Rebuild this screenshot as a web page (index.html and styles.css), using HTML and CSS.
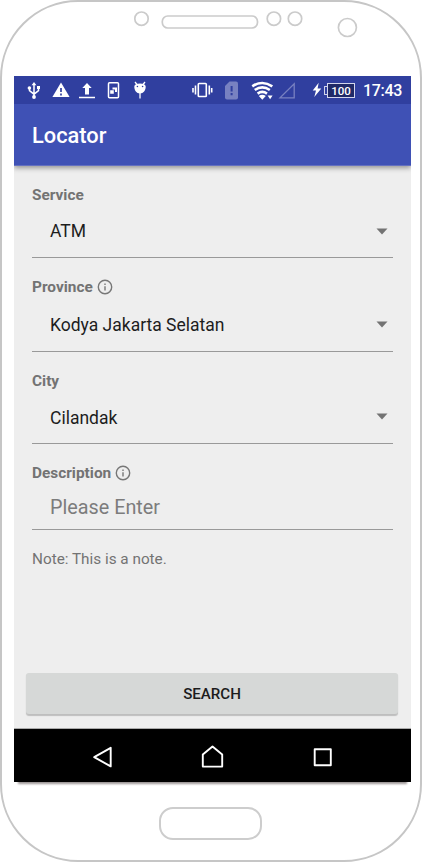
FILE: index.html
```html
<!DOCTYPE html>
<html lang="en">
<head>
<meta charset="utf-8">
<title>Locator</title>
<link rel="stylesheet" href="styles.css">
</head>
<body>
<div class="phone">
  <div class="sensors">
    <svg width="418" height="74" viewBox="2 2 418 74" fill="none" stroke="#cbcbcb" stroke-width="1.7">
      <circle cx="141.5" cy="18.7" r="6.7"/>
      <rect x="162.3" y="16" width="95.2" height="12" rx="5.5"/>
      <circle cx="273.9" cy="18.7" r="6.7"/>
      <circle cx="295" cy="18.7" r="6.7"/>
      <circle cx="347.4" cy="27.5" r="9"/>
    </svg>
  </div>
  <div class="screen">
    <div class="status">
      <div class="notices">
        <svg width="24" height="28" viewBox="0 0 24 28" fill="none" stroke="#fff" stroke-width="1.5">
          <path d="M12 9v12M7.5 11.5v3.2l4.5 3.5 4.5-3.5v-3.2"/>
          <path d="M12 6l2.4 3.3H9.6zM15 10h3v3h-3z" fill="#fff" stroke="none"/>
          <circle cx="7.4" cy="12" r="1.8" fill="#fff" stroke="none"/><circle cx="12" cy="21" r="1.9" fill="#fff" stroke="none"/>
        </svg>
        <svg width="24" height="28" viewBox="0 0 24 28">
          <path d="M12 6.5L20.6 21H3.4z" fill="#fff"/><path d="M12 12v4M12 17.5v2" stroke="#303f9f" stroke-width="1.7"/>
        </svg>
        <svg width="24" height="28" viewBox="0 0 24 28" fill="#fff">
          <path d="M12 7l4.7 5H14v6.5h-4V12H7.3zM4 20.8h16v1.5H4z"/>
        </svg>
        <svg width="24" height="28" viewBox="0 0 24 28" fill="none" stroke="#fff">
          <rect x="6.5" y="6.8" width="10" height="15" rx="1" stroke-width="1.5"/>
          <path d="M10.5 11.5h4.500v4.500h-2v-2.500h-2.500zM8.200 14.200h3.600v3.500H8.200z" fill="#fff" stroke="none"/>
        </svg>
        <svg width="24" height="28" viewBox="0 0 24 28">
          <path d="M6.300 10.500c0-2 2.500-3 5.700-3s5.700 1 5.700 3c0 4-2.300 7-5.700 7s-5.700-3-5.700-7z" fill="#fff"/>
          <path d="M7 6l2 2.500M17 6l-2 2.500M12 17v5.500" stroke="#fff" stroke-width="1.300"/>
          <circle cx="9.400" cy="10.500" r=".8" fill="#303f9f"/><circle cx="14.600" cy="10.500" r=".8" fill="#303f9f"/>
        </svg>
      </div>
      <div class="system">
        <svg width="22" height="28" viewBox="191 76 22 28" fill="none" stroke="#fff" stroke-width="1.600">
          <rect x="198.300" y="83.500" width="8" height="13" rx=".8"/>
          <path d="M195.500 85.500v9M209.300 85.500v9M193 88v4.500M211.700 88v4.500"/>
        </svg>
        <svg class="sim" width="14" height="28" viewBox="225 76 14 28">
          <path d="M229.500 81.500h6.500q2 0 2 2v14q0 2-2 2h-9q-2 0-2-2V86z" fill="#7881c1"/>
          <path d="M231.600 86v5.500M231.600 93v2.300" stroke="#303f9f" stroke-width="2"/>
        </svg>
        <svg class="wifi" width="23" height="28" viewBox="251 76 23 28">
          <g fill="none" stroke="#fff" stroke-width="2.600"><path d="M252.300 86.300q10-6.700 20 0M254.800 90q7.500-5.200 15 0M257.600 93.600q4.700-3.400 9.400 0"/></g>
          <path d="M258.800 96q3.500-2.500 7 0l-3.500 3.800zM267.600 95.600h5l-2.500 3.600z" fill="#fff"/>
        </svg>
        <svg class="signal" width="18" height="28" viewBox="278 76 18 28">
          <path d="M294.200 83.800v14H280z" fill="none" stroke="#7881c1" stroke-width="1.300"/>
        </svg>
        <svg class="bolt" width="10" height="28" viewBox="312 76 10 28">
          <path d="M318.700 82.800l-6 7.700h3.300l-1.700 6.500 7-8.500h-3.700z" fill="#fff"/>
        </svg>
        <i class="nub"></i>
        <span class="battery">100</span>
        <span class="time">17:43</span>
      </div>
    </div>
    <header class="toolbar"><h1>Locator</h1></header>
    <main class="form">
      <section class="field service">
        <div class="label">Service</div>
        <div class="select"><span>ATM</span><svg width="12" height="7" viewBox="0 0 12 7"><path d="M.5.500h11L6 6.500z" fill="#737373"/></svg></div>
      </section>
      <section class="field province">
        <div class="label">Province<svg class="info" viewBox="0 0 16 16"><circle cx="8" cy="8" r="6.700"/><path d="M8 7.200v4.300M8 4.500v1.500"/></svg></div>
        <div class="select"><span>Kodya Jakarta Selatan</span><svg width="12" height="7" viewBox="0 0 12 7"><path d="M.5.500h11L6 6.500z" fill="#737373"/></svg></div>
      </section>
      <section class="field city">
        <div class="label">City</div>
        <div class="select"><span>Cilandak</span><svg width="12" height="7" viewBox="0 0 12 7"><path d="M.5.500h11L6 6.500z" fill="#737373"/></svg></div>
      </section>
      <section class="field description">
        <div class="label">Description<svg class="info" viewBox="0 0 16 16"><circle cx="8" cy="8" r="6.700"/><path d="M8 7.200v4.300M8 4.500v1.500"/></svg></div>
        <div class="select entry"><span>Please Enter</span></div>
      </section>
      <p class="note">Note: This is a note.</p>
      <button class="search">SEARCH</button>
    </main>
    <nav class="nav">
      <svg width="397" height="53" viewBox="14 729 397 53" fill="none" stroke="#fff" stroke-width="1.900" stroke-linejoin="round">
        <path d="M110.700 747.800v18.600L94.200 757.100z"/>
        <path d="M202.800 766.600V754.500l9.700-8.100 9.700 8.100v12.100z"/>
        <path d="M314.700 749.300h16.100v16h-16.100z"/>
      </svg>
    </nav>
  </div>
  <div class="home"></div>
</div>
</body>
</html>
```
FILE: styles.css
```css
* { box-sizing: border-box; }
body {
  margin: 0;
  background: #fff;
  font-family: Roboto, "Liberation Sans", sans-serif;
  overflow: hidden;
}
svg { display: block; flex: none; }
.phone {
  width: 422px;
  height: 862px;
  border: 2px solid #c6c6c6;
  border-radius: 78px;
}
.sensors { height: 74px; }
.screen {
  width: 397px;
  height: 706px;
  margin-left: 12px;
  display: flex;
  flex-direction: column;
  background: #eee;
  box-shadow: 0 6px 2px -4px #9b9494;
}
.status {
  height: 28px;
  background: #303f9f;
  display: flex;
  justify-content: space-between;
  padding: 0 9px 0 8px;
  color: #fff;
}
.notices { display: flex; gap: 2.5px; }
.system { display: flex; align-items: center; }
.sim { margin-left: 12px; }
.wifi { margin-left: 12px; }
.signal { margin-left: 4px; }
.bolt { margin-left: 16px; }
.nub {
  width: 3px;
  height: 9px;
  margin-left: 2px;
  border: 1px solid #d2d5eb;
  border-right: 0;
  border-radius: 1px 0 0 1px;
}
.battery {
  width: 28px;
  height: 15px;
  margin-right: 8px;
  border: 1px solid #d2d5eb;
  background: #1f2967;
  font-size: 11.5px;
  font-weight: 500;
  line-height: 14px;
  text-align: center;
}
.time {
  width: 39px;
  font-size: 16px;
  font-weight: 500;
  line-height: 29px;
  letter-spacing: -.3px;
  white-space: nowrap;
}
.toolbar {
  height: 62px;
  padding-left: 18px;
  background: #3f51b5;
  border-bottom: 1px solid #6470c0;
  box-shadow: 0 2px 5px rgba(0,0,0,.38);
  clip-path: inset(0 0 -9px 0);
}
.toolbar h1 {
  margin: 0;
  color: #fff;
  font-size: 21.8px;
  font-weight: 500;
  line-height: 63px;
}
.form {
  flex: 1;
  display: flex;
  flex-direction: column;
  padding: 17px 12.5px 14px;
  border-bottom: 1px solid #aaa;
}
.field { margin: 0 5.5px; }
.service { height: 93px; }
.province { height: 94px; }
.city { height: 92px; }
.description { height: 86px; }
.label {
  display: flex;
  align-items: center;
  height: 22px;
  color: #737373;
  font-size: 15.4px;
  font-weight: 700;
}
.service .label { padding-top: 1px; }
.info {
  width: 16px;
  height: 16px;
  margin-left: 4px;
  fill: none;
  stroke: #777;
  stroke-width: 1.4;
}
.select {
  height: 53px;
  padding: 0 5px 1px 18px;
  border-bottom: 1px solid #999;
  display: flex;
  align-items: center;
  justify-content: space-between;
  color: #1d1d1d;
  font-size: 17.5px;
}
.service .select { padding-bottom: 0; }
.province .select { height: 54px; padding-bottom: 0; }
.city .select { height: 52px; padding-bottom: 0; }
.city svg { margin-top: -2px; }
.select.entry {
  height: 46px;
  padding-top: 1px;
  padding-bottom: 0;
  color: #7c7c7c;
  font-size: 19.8px;
}
.note {
  margin: 1px 5.5px 0;
  color: #737373;
  font-size: 15.3px;
  line-height: 20px;
}
.search {
  width: 372px;
  height: 41px;
  margin: auto 0 0 -.5px;
  padding: 0;
  border: 0;
  border-radius: 3px;
  background: #d6d8d7;
  box-shadow: 0 1.5px 1px rgba(0,0,0,.2);
  font: 500 15.1px/42px Roboto, sans-serif;
  color: #1c1c1c;
}
.nav { height: 53px; background: #000; }
.home {
  width: 103px;
  height: 33px;
  margin: 25px 0 0 157px;
  border: 2px solid #cdcdcd;
  border-radius: 14px;
}
```
